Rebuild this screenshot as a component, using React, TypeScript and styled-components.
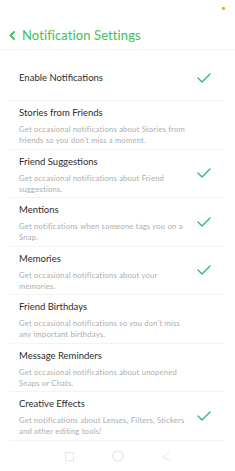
import React from 'react'
import styled, { createGlobalStyle } from 'styled-components'

const GlobalStyle = createGlobalStyle`
  html, body {
    margin: 0;
    padding: 0;
    background: #fff;
  }
  body {
    font-family: Lato, "Open Sans", sans-serif;
    -webkit-font-smoothing: antialiased;
  }
`

const Screen = styled.div`
  width: 235px;
  height: 471px;
  display: flex;
  flex-direction: column;
  background: #fff;
  overflow: hidden;
`

const StatusBar = styled.div`
  height: 20px;
  display: flex;
  justify-content: flex-end;
  align-items: flex-start;
  padding: 7px 10px 0 0;
  box-sizing: border-box;
`

const Dot = styled.span`
  width: 3px;
  height: 3px;
  border-radius: 1px;
  background: #f5a623;
`

const Header = styled.header`
  height: 30px;
  display: flex;
  align-items: center;
  gap: 7px;
  padding: 1px 0 0 9px;
  box-sizing: border-box;
  border-bottom: 1px solid #f3f3f3;
`

const Title = styled.h1`
  margin: 0;
  font-size: 13px;
  font-weight: 400;
  color: #3bc25a;
  letter-spacing: 0.1px;
`

const List = styled.ul`
  list-style: none;
  margin: 0;
  padding: 0 10px;
`

const Row = styled.li<{ $tall?: boolean }>`
  display: flex;
  align-items: center;
  justify-content: space-between;
  height: ${({ $tall }) => ($tall ? '48.5px' : '51px')};
  padding: ${({ $tall }) => ($tall ? '0 14px 0 9px' : '5px 14px 0 9px')};
  border-bottom: 1px solid #f3f3f3;
  box-sizing: border-box;
`

const Texts = styled.div`
  align-self: flex-start;
  margin-top: 6px;
  display: flex;
  flex-direction: column;
  gap: 5px;
  max-width: 172px;
`

const Label = styled.div`
  font-size: 9.5px;
  line-height: 12px;
  color: #2b2b2b;
`

const Desc = styled.div`
  font-size: 7.6px;
  line-height: 11px;
  color: #acacac;
  letter-spacing: 0.22px;
`

const NavBar = styled.nav`
  margin-top: auto;
  height: 30px;
  display: flex;
  justify-content: center;
  align-items: center;
  gap: 38px;
`

const Check = () => (
  <svg width="14" height="10" viewBox="0 0 14 10">
    <path d="M1 5 L5 9 L13 1" fill="none" stroke="#2cb98a" strokeWidth="1.4" strokeLinecap="round" strokeLinejoin="round" />
  </svg>
)

const Chevron = () => (
  <svg width="6" height="9" viewBox="0 0 6 9">
    <path d="M5 1 L1.5 4.5 L5 8" fill="none" stroke="#3bc25a" strokeWidth="1.8" strokeLinecap="round" strokeLinejoin="round" />
  </svg>
)

const items: { label: string; desc: string; on: boolean }[] = [
  { label: 'Stories from Friends', desc: "Get occasional notifications about Stories from friends so you don't miss a moment.", on: false },
  { label: 'Friend Suggestions', desc: 'Get occasional notifications about Friend suggestions.', on: true },
  { label: 'Mentions', desc: 'Get notifications when someone tags you on a Snap.', on: true },
  { label: 'Memories', desc: 'Get occasional notifications about your memories.', on: true },
  { label: 'Friend Birthdays', desc: "Get occasional notifications so you don't miss any important birthdays.", on: false },
  { label: 'Message Reminders', desc: 'Get occasional notifications about unopened Snaps or Chats.', on: false },
  { label: 'Creative Effects', desc: 'Get notifications about Lenses, Filters, Stickers and other editing tools!', on: true },
]

export default function App() {
  return (
    <Screen>
      <GlobalStyle />
      <StatusBar>
        <Dot />
      </StatusBar>
      <Header>
        <Chevron />
        <Title>Notification Settings</Title>
      </Header>
      <List>
        <Row>
          <Label>Enable Notifications</Label>
          <Check />
        </Row>
        {items.map((item) => (
          <Row key={item.label} $tall>
            <Texts>
              <Label>{item.label}</Label>
              <Desc>{item.desc}</Desc>
            </Texts>
            {item.on && <Check />}
          </Row>
        ))}
      </List>
      <NavBar>
        <svg width="9" height="9" viewBox="0 0 9 9">
          <rect x="0.5" y="0.5" width="8" height="8" fill="none" stroke="#e6e6e6" />
        </svg>
        <svg width="12" height="12" viewBox="0 0 12 12">
          <circle cx="6" cy="6" r="5" fill="none" stroke="#e6e6e6" strokeWidth="1.2" />
        </svg>
        <svg width="8" height="9" viewBox="0 0 8 9">
          <path d="M7.5 0.5 L0.8 4.5 L7.5 8.5" fill="none" stroke="#e6e6e6" />
        </svg>
      </NavBar>
    </Screen>
  )
}
